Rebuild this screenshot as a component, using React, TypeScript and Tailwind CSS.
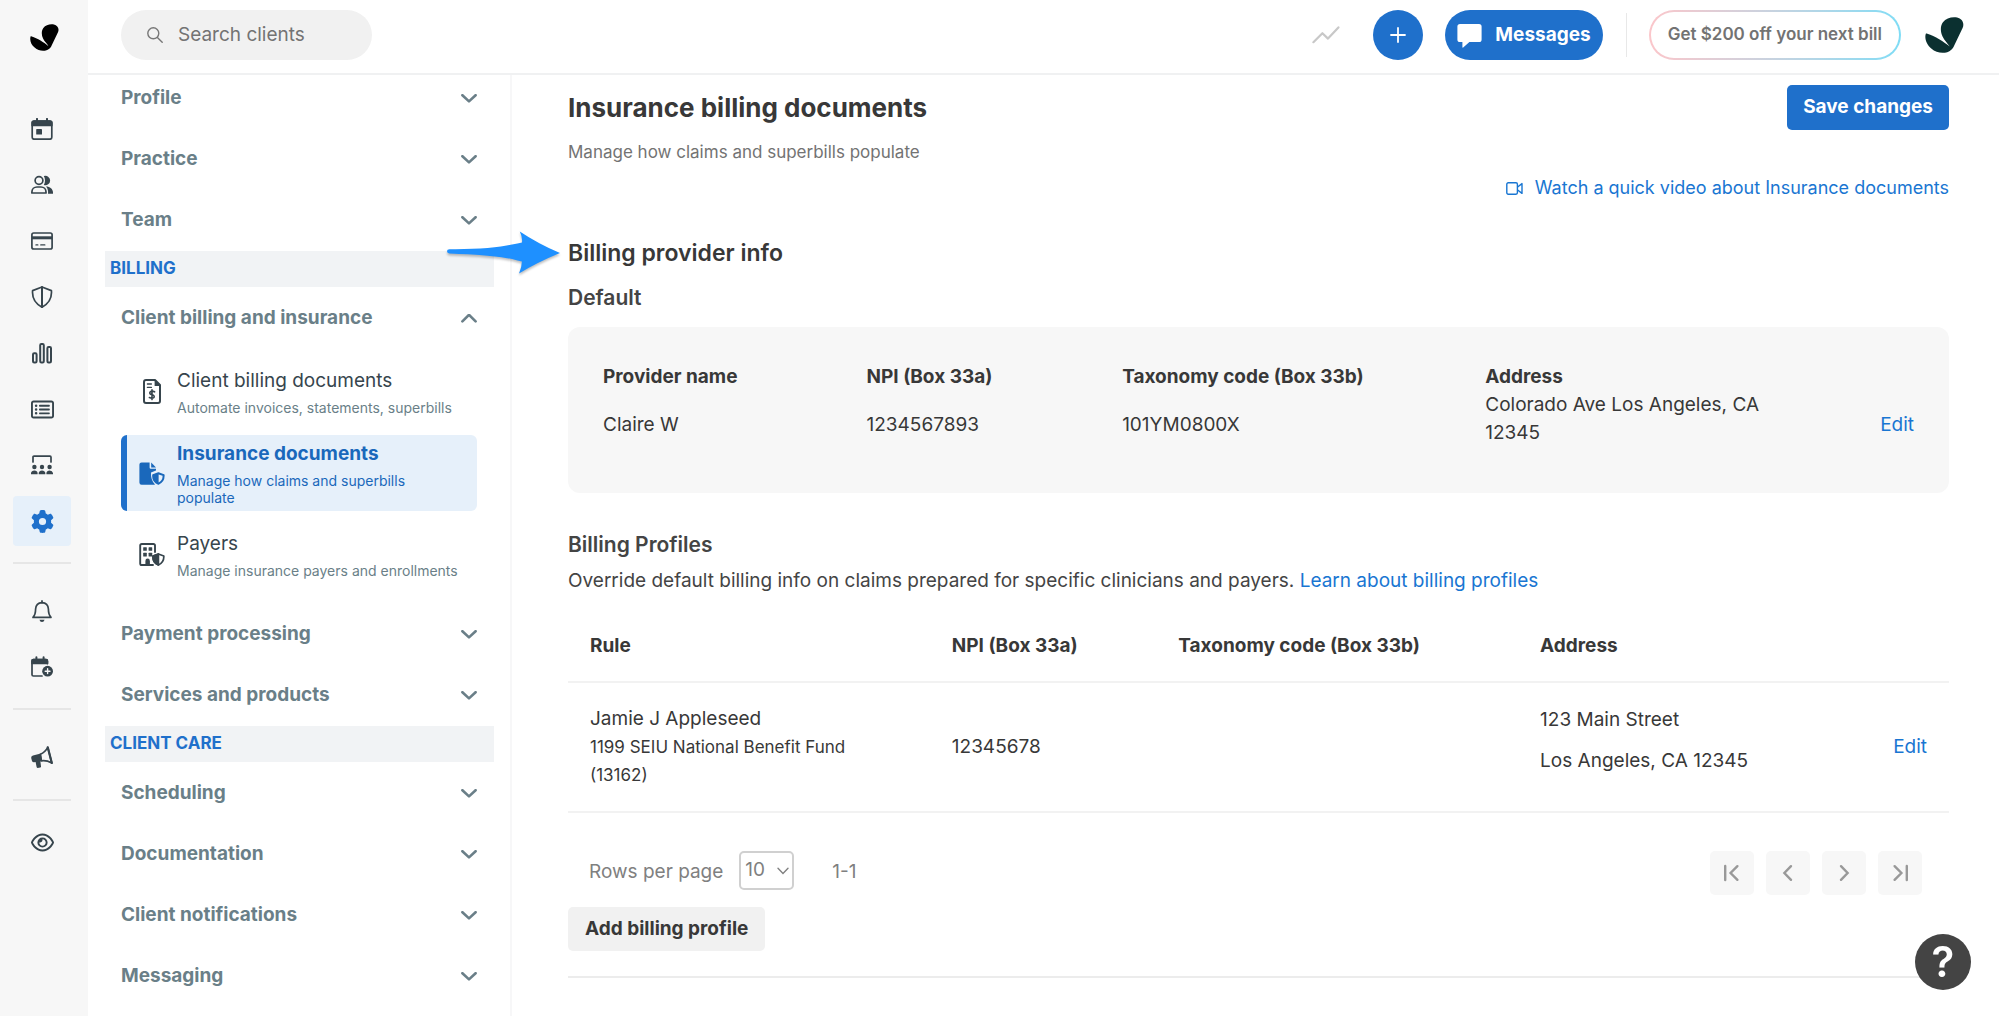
import React, { ReactNode } from 'react'
import { FaGear, FaRegEye, FaRegRectangleList } from 'react-icons/fa6'

function LeafLogo({ className }: { className: string }) {
  return (
    <svg viewBox="0 0 40 37" className={className} fill="currentColor" aria-hidden="true">
      <path d="M0.8 17.2C-0.8 22 1.6 28.6 6.4 32.4C12.6 37.8 21.6 38.4 27 33.6C28.6 32 29.2 31 30 29.2L38.6 11.4C40.8 6.4 38 1.6 33 0.6C28 -0.4 21.6 1 18.4 5.4C15.4 9.6 15.8 15.4 18 20C20 24.2 23.6 27.4 25.4 30.4C19.6 25.6 10 19.4 2.4 17.2C1.6 16.8 1 16.8 0.8 17.2Z" />
    </svg>
  )
}

function Icon({ children, className = 'size-[22px]', box = '0 0 22 22' }: { children: ReactNode; className?: string; box?: string }) {
  return (
    <svg viewBox={box} className={className} fill="none" stroke="currentColor" strokeWidth="1.7" strokeLinejoin="round" strokeLinecap="round" aria-hidden="true">
      {children}
    </svg>
  )
}

const CalendarIcon = () => (
  <Icon>
    <rect x="1.2" y="3" width="19.6" height="18.2" rx="2" />
    <path d="M1.2 7.4V5Q1.2 3 3.2 3H18.8Q20.8 3 20.8 5V7.4Z" fill="currentColor" />
    <path d="M6 0.9V3M16 0.9V3" strokeWidth="2" />
    <rect x="5.2" y="11" width="5.8" height="5.6" rx="0.4" fill="currentColor" stroke="none" />
  </Icon>
)

const PeopleIcon = () => (
  <Icon>
    <circle cx="8" cy="6.5" r="3.9" />
    <path d="M0.9 19V18C0.9 15 3.2 13 6 13H10C12.8 13 15 15 15 18V19Z" />
    <path d="M12.8 2.1A4.7 4.7 0 1 1 12.8 10.9Q14 9 14 6.5T12.8 2.1Z" fill="currentColor" stroke="none" />
    <path d="M15 12.4C19 12.4 22 14.8 22 18.6V19.8H17C17.4 17 16.8 14.4 15 12.4Z" fill="currentColor" stroke="none" />
  </Icon>
)

const CardIcon = () => (
  <Icon>
    <rect x="0.9" y="3" width="20.2" height="16" rx="1.8" />
    <path d="M1 7.8H21" strokeWidth="3" strokeLinecap="butt" />
    <path d="M5 14.9H6.8M9.8 14.9H13.8" strokeWidth="1.4" />
  </Icon>
)

const ShieldIcon = () => (
  <Icon>
    <path d="M11 1L20.4 4.6Q21.4 15.6 11 21.2Q0.6 15.6 1.6 4.6Z" />
    <path d="M11 1V21" strokeWidth="2" />
  </Icon>
)

const ChartIcon = () => (
  <Icon>
    <rect x="2" y="11.2" width="3.6" height="9.2" rx="1.2" strokeWidth="2" />
    <rect x="9.2" y="2" width="3.6" height="18.4" rx="1.2" strokeWidth="2" />
    <rect x="16.4" y="5" width="3.6" height="15.4" rx="1.2" strokeWidth="2" />
  </Icon>
)

const GroupIcon = () => (
  <Icon>
    <path d="M2 8V3.2Q2 2.2 3 2.2H19Q20 2.2 20 3.2V8" />
    <g fill="currentColor" stroke="none">
      <circle cx="3.4" cy="13" r="2.2" />
      <circle cx="11" cy="13" r="2.2" />
      <circle cx="18.6" cy="13" r="2.2" />
      <path d="M0 20.2V19Q0.4 16.4 3.4 16.4T6.6 19V20.2Z" />
      <path d="M7.7 20.2V19Q8.1 16.4 11 16.4T14.3 19V20.2Z" />
      <path d="M15.4 20.2V19Q15.8 16.4 18.6 16.4T22 19V20.2Z" />
    </g>
  </Icon>
)

const BellIcon = () => (
  <Icon>
    <path d="M2 17.4Q4.6 14.6 4.6 9Q5 3 11 2.6Q17 3 17.4 9Q17.4 14.6 20 17.4Z" />
    <path d="M11 0.9V2.4" />
    <path d="M8.4 19.8H13.6Q13 22 11 22T8.4 19.8Z" fill="currentColor" stroke="none" />
  </Icon>
)

const CalendarPlusIcon = () => (
  <Icon>
    <path d="M16.4 7.6V5Q16.4 3.6 15 3.6H2.4Q1 3.6 1 5V18.8Q1 20 2.4 20H11" />
    <path d="M1 7.4V5Q1 3.6 2.4 3.6H15Q16.4 3.6 16.4 5V7.4Z" fill="currentColor" />
    <path d="M5.4 1.2V3M12.6 1.2V3" strokeWidth="2" />
    <circle cx="16.6" cy="15.2" r="5.4" fill="currentColor" stroke="none" />
    <path d="M16.6 12.8V17.6M14.2 15.2H19" stroke="#f7f7f7" strokeWidth="1.4" />
  </Icon>
)

const MegaphoneIcon = () => (
  <Icon>
    <path d="M9.4 8.2Q14 6.4 16.8 1.4L20.8 17Q15.4 14 10.4 14.8Z" />
    <path d="M9.8 7.6L2 9.6Q0 10.2 0.2 12L1 15Q1.6 16.4 3.2 16.2L4.6 16L5.6 21Q5.8 22 6.8 22L9.2 21.6Q10.2 21.4 10 20.4L9.4 15.4L11 15Z" fill="currentColor" stroke="none" />
    <path d="M16.8 1.4L20.8 17" strokeWidth="2.2" />
  </Icon>
)

const InvoiceIcon = () => (
  <Icon box="0 0 18 25" className="h-[25px] w-[18px] text-[#37454d]">
    <path d="M1 3Q1 1 3 1H12L17 6V22Q17 24 15 24H3Q1 24 1 22Z" strokeWidth="2" />
    <path d="M11.6 0.6L17.8 7H11.6Z" fill="currentColor" stroke="none" />
    <path d="M4.4 5H8.4M4.4 8.4H8.4" strokeWidth="1.3" />
    <path d="M11.6 12.8Q8.9 11.4 7.3 12.8C6 14.4 7.2 15.4 9 15.8S12 17.4 10.7 18.7Q9.2 19.8 6.4 18.6M9 10.8V20.6" strokeWidth="1.6" />
  </Icon>
)

const DocShieldIcon = () => (
  <Icon box="0 0 26 23" className="h-[23px] w-[26px] text-[#1a68bb]">
    <path d="M2.6 0.4H10.6V5.6Q10.6 6.8 11.8 6.8H17V8.6L12 10.6Q11.6 18.6 16 22.4Q15.4 22.8 14.6 22.8H2.6Q0.4 22.8 0.4 20.6V2.6Q0.4 0.4 2.6 0.4Z" fill="currentColor" stroke="none" />
    <path d="M12.2 0.4L17 5.4H12.2Z" fill="currentColor" stroke="none" />
    <path d="M19.4 11L24.8 13Q25.2 19.4 19.4 22Q13.4 19.4 14 13Z" strokeWidth="1.6" fill="currentColor" />
    <path d="M19.6 12.4L23.6 13.8Q23.8 18.4 19.6 20.6Z" fill="#e6f0fa" stroke="none" />
  </Icon>
)

const BuildingShieldIcon = () => (
  <Icon box="0 0 26 23" className="h-[23px] w-[26px] text-[#37454d]">
    <path d="M16 9V2.6Q16 1 14.4 1H2.8Q1.2 1 1.2 2.6V20.4Q1.2 22 2.8 22H14" strokeWidth="1.9" />
    <g fill="currentColor" stroke="none">
      <rect x="4.2" y="4.2" width="3.6" height="3.6" rx="0.5" />
      <rect x="9.6" y="4.2" width="3.6" height="3.6" rx="0.5" />
      <rect x="4.2" y="9.8" width="3.6" height="3.6" rx="0.5" />
      <rect x="9.6" y="9.8" width="3.6" height="3.6" rx="0.5" />
      <path d="M6.4 22V18Q6.4 15.6 8.6 15.6T10.9 18V22Z" />
    </g>
    <path d="M19.4 11L24.8 13Q25.2 19.4 19.4 22Q13.4 19.4 14 13Z" fill="#fff" />
    <path d="M19.4 11V22Q13.4 19.4 14 13Z" fill="currentColor" />
  </Icon>
)

function Chevron({ up = false }: { up?: boolean }) {
  return (
    <svg viewBox="0 0 16 10" className="h-2.5 w-4 shrink-0" fill="none" stroke="currentColor" strokeWidth="2.6" strokeLinecap="round" strokeLinejoin="round" aria-hidden="true">
      <path d={up ? 'M1.4 7.4L8 0.8L14.6 7.4' : 'M1.4 1.2L8 7.4L14.6 1.2'} />
    </svg>
  )
}

function RailLink({ label, active = false, children }: { label: string; active?: boolean; children: ReactNode }) {
  return (
    <a
      href="#"
      aria-label={label}
      className={
        active
          ? 'flex h-[50px] w-[58px] items-center justify-center rounded-[4px] bg-[#e6f0fa] text-[#1f70cb]'
          : 'flex h-[50px] w-[58px] items-center justify-center text-[#37454d]'
      }
    >
      {children}
    </a>
  )
}

function Rail() {
  return (
    <nav aria-label="Main" className="flex w-[88px] shrink-0 flex-col bg-[#f7f7f7] pl-[13px]">
      <a href="#" aria-label="Home" className="flex h-[75px] w-[58px] items-center justify-center pl-[5px] text-black">
        <LeafLogo className="h-[27px] w-[29px]" />
      </a>
      <div className="mt-[29px] flex flex-col gap-1.5">
        <RailLink label="Calendar"><CalendarIcon /></RailLink>
        <RailLink label="Clients"><PeopleIcon /></RailLink>
        <RailLink label="Billing"><CardIcon /></RailLink>
        <RailLink label="Insurance"><ShieldIcon /></RailLink>
        <RailLink label="Analytics"><ChartIcon /></RailLink>
        <RailLink label="Activity"><FaRegRectangleList className="size-[23px]" /></RailLink>
        <RailLink label="Team"><GroupIcon /></RailLink>
        <RailLink label="Settings" active><FaGear className="size-[23px]" /></RailLink>
      </div>
      <hr className="mt-4 w-[58px] border-t-2 border-[#e6e6e6]" />
      <div className="mt-[22px] flex flex-col gap-1.5">
        <RailLink label="Reminders"><BellIcon /></RailLink>
        <RailLink label="Requests"><CalendarPlusIcon /></RailLink>
      </div>
      <hr className="mt-4 w-[58px] border-t-2 border-[#e6e6e6]" />
      <div className="mt-[22px]">
        <RailLink label="Marketing"><MegaphoneIcon /></RailLink>
      </div>
      <hr className="mt-[17px] w-[58px] border-t-2 border-[#e6e6e6]" />
      <div className="mt-4">
        <RailLink label="Preview"><FaRegEye className="size-[23px]" /></RailLink>
      </div>
    </nav>
  )
}

function Header() {
  return (
    <header className="flex h-[75px] shrink-0 items-center border-b-2 border-[#f0f1f2] pr-[35px] pb-[3px] pl-[33px]">
      <label className="flex h-[50px] w-[251px] items-center gap-[15px] rounded-full bg-[#f1f1f1] pl-[26px]">
        <svg viewBox="0 0 16 16" className="size-4 shrink-0 text-[#777]" fill="none" stroke="currentColor" strokeWidth="1.4" strokeLinecap="round" aria-hidden="true">
          <circle cx="6.3" cy="6.3" r="5.5" />
          <path d="M10.4 10.4L15.2 15.2" />
        </svg>
        <input type="search" aria-label="Search clients" placeholder="Search clients" className="w-full min-w-0 bg-transparent pr-6 text-[19px] outline-none placeholder:text-[#737373]" />
      </label>
      <div className="ml-auto flex items-center">
        <button type="button" aria-label="Activity" className="text-[#c8c8c8]">
          <svg viewBox="0 0 28 18" className="h-[18px] w-7" fill="none" stroke="currentColor" strokeWidth="2.2" strokeLinejoin="round" strokeLinecap="round" aria-hidden="true">
            <path d="M1.4 16.2L10.4 7.2L16 12.6L26.4 1.4" />
          </svg>
        </button>
        <button type="button" aria-label="Add" className="ml-[33px] flex size-[50px] items-center justify-center rounded-full bg-[#1f70cb] text-white">
          <svg viewBox="0 0 16 16" className="size-4" stroke="currentColor" strokeWidth="1.8" strokeLinecap="round" aria-hidden="true">
            <path d="M8 1V15M1 8H15" />
          </svg>
        </button>
        <button type="button" className="ml-[22px] flex h-[50px] items-center gap-[13px] rounded-full bg-[#1f70cb] pr-3 pl-3 text-[19px] font-bold text-white">
          <svg viewBox="0 0 25 25" className="size-[25px]" fill="currentColor" aria-hidden="true">
            <path d="M3 1H22Q24.6 1 24.6 3.6V16.4Q24.6 19 22 19H12.4L6.2 24.6Q5.4 25 5.4 24V19H3Q0.4 19 0.4 16.4V3.6Q0.4 1 3 1Z" />
          </svg>
          Messages
        </button>
        <div className="ml-[23px] h-11 w-px bg-[#e8e8e8]" />
        <button type="button" className="ml-[22px] h-[50px] rounded-full bg-linear-to-r from-[#fbc6ca] to-[#7fdcf5] p-[2px] text-[17px] font-semibold text-[#737373]">
          <span className="flex h-full items-center rounded-full bg-white px-[17px]">Get $200 off your next bill</span>
        </button>
        <a href="#" aria-label="Account" className="ml-6 text-[#0b3030]">
          <LeafLogo className="h-9 w-[39px]" />
        </a>
      </div>
    </header>
  )
}

function NavItem({ label, open = false }: { label: string; open?: boolean }) {
  return (
    <button type="button" aria-expanded={open} className="flex h-[61px] w-full shrink-0 items-center justify-between pr-[33px] pl-[33px] text-left text-[19px] font-bold text-[#6a7f88]">
      {label}
      <Chevron up={open} />
    </button>
  )
}

function NavSection({ label }: { label: string }) {
  return <h2 className="mr-4 mb-px ml-[17px] flex h-9 shrink-0 items-center bg-[#f1f3f5] pl-[5px] text-[17px] font-bold text-[#1f70cb]">{label}</h2>
}

function SubItem({ icon, title, text, active = false }: { icon: ReactNode; title: string; text: string; active?: boolean }) {
  return (
    <li>
      <a
        href="#"
        className={
          active
            ? 'flex items-center rounded-md border-l-[6px] border-[#1f70cb] bg-[#e6f0fa] py-[5px] text-[#1a68bb]'
            : 'flex items-center border-l-[6px] border-transparent py-[5px] text-[#37454d]'
        }
      >
        <span className="flex w-[50px] shrink-0 justify-center">{icon}</span>
        <span className="flex flex-col gap-1">
          <span className={active ? 'text-[19px] leading-7 font-bold' : 'text-[19px] leading-7'}>{title}</span>
          <span className={active ? 'pr-8 text-[14px] leading-[17px]' : 'text-[14px] leading-[17px] whitespace-nowrap text-[#6a7f88]'}>{text}</span>
        </span>
      </a>
    </li>
  )
}

function SettingsNav() {
  return (
    <nav aria-label="Settings" className="w-[424px] shrink-0 overflow-hidden border-r-2 border-[#f7f7f8]">
      <div className="-mt-[7px] flex flex-col">
        <NavItem label="Profile" />
        <NavItem label="Practice" />
        <NavItem label="Team" />
        <NavSection label="BILLING" />
        <NavItem label="Client billing and insurance" open />
        <ul className="mt-[13px] mr-[33px] mb-5 ml-[33px] flex flex-col gap-3.5">
          <SubItem icon={<InvoiceIcon />} title="Client billing documents" text="Automate invoices, statements, superbills" />
          <SubItem icon={<DocShieldIcon />} title="Insurance documents" text="Manage how claims and superbills populate" active />
          <SubItem icon={<BuildingShieldIcon />} title="Payers" text="Manage insurance payers and enrollments" />
        </ul>
        <NavItem label="Payment processing" />
        <NavItem label="Services and products" />
        <NavSection label="CLIENT CARE" />
        <NavItem label="Scheduling" />
        <NavItem label="Documentation" />
        <NavItem label="Client notifications" />
        <NavItem label="Messaging" />
      </div>
    </nav>
  )
}

function DefaultProvider() {
  return (
    <div className="mt-[15px] rounded-xl bg-[#f7f7f7] px-[35px] pt-9 pb-[46px]">
      <table className="w-full table-fixed text-left leading-7">
        <colgroup>
          <col className="w-[20.1%]" />
          <col className="w-[19.5%]" />
          <col className="w-[27.7%]" />
          <col className="w-[22.7%]" />
          <col />
        </colgroup>
        <thead>
          <tr>
            <th scope="col" className="font-bold">Provider name</th>
            <th scope="col" className="font-bold">NPI (Box 33a)</th>
            <th scope="col" className="font-bold">Taxonomy code (Box 33b)</th>
            <th scope="col" className="font-bold">Address</th>
            <td />
          </tr>
        </thead>
        <tbody>
          <tr className="align-top">
            <td className="pt-5">Claire W</td>
            <td className="pt-5">1234567893</td>
            <td className="pt-5">101YM0800X</td>
            <td>Colorado Ave Los Angeles, CA 12345</td>
            <td className="pt-5 text-right"><a href="#" className="text-[#1976d2]">Edit</a></td>
          </tr>
        </tbody>
      </table>
    </div>
  )
}

function ProfilesTable() {
  return (
    <table className="mt-4 w-full table-fixed text-left leading-7">
      <colgroup>
        <col className="w-[26.2%]" />
        <col className="w-[16.4%]" />
        <col className="w-[26.2%]" />
        <col className="w-[22%]" />
        <col />
      </colgroup>
      <thead>
        <tr className="h-[71px] border-b-2 border-[#f2f2f2]">
          <th scope="col" className="pl-[22px] font-bold">Rule</th>
          <th scope="col" className="pl-[22px] font-bold">NPI (Box 33a)</th>
          <th scope="col" className="pl-[22px] font-bold">Taxonomy code (Box 33b)</th>
          <th scope="col" className="pl-[22px] font-bold">Address</th>
          <td />
        </tr>
      </thead>
      <tbody>
        <tr className="h-[130px] border-b-2 border-[#f2f2f2]">
          <td className="pr-10 pl-[22px]">
            Jamie J Appleseed
            <div className="text-[17px]">1199 SEIU National Benefit Fund (13162)</div>
          </td>
          <td className="pl-[22px]">12345678</td>
          <td />
          <td className="pl-[22px]">
            <p className="mb-[13px]">123 Main Street</p>
            <p className="mb-[13px]">Los Angeles, CA 12345</p>
          </td>
          <td className="pr-[22px] text-right"><a href="#" className="text-[#1976d2]">Edit</a></td>
        </tr>
      </tbody>
    </table>
  )
}

function PageButton({ label, path }: { label: string; path: string }) {
  return (
    <button type="button" aria-label={label} className="flex size-11 items-center justify-center rounded-[5px] bg-[#f7f7f7] text-[#999]">
      <svg viewBox="0 0 18 18" className="size-[18px]" fill="none" stroke="currentColor" strokeWidth="2.4" strokeLinecap="round" aria-hidden="true">
        <path d={path} />
      </svg>
    </button>
  )
}

function Pagination() {
  return (
    <div className="mt-[38px] flex items-start justify-between pr-[27px] pl-[21px] text-[#808080]">
      <div className="flex h-[38px] items-center">
        <label htmlFor="rows" className="pt-1">Rows per page</label>
        <span className="relative ml-4 block">
          <select id="rows" defaultValue="10" className="h-[39px] w-[55px] appearance-none rounded-[5px] border-2 border-[#d0d0d0] bg-white pl-1 text-[19px]">
            <option>10</option>
            <option>25</option>
            <option>50</option>
          </select>
          <svg viewBox="0 0 12 8" className="pointer-events-none absolute top-4 right-[5px] h-2 w-3" fill="none" stroke="currentColor" strokeWidth="1.4" strokeLinecap="round" aria-hidden="true">
            <path d="M1 1.2L6 6.4L11 1.2" />
          </svg>
        </span>
        <span className="pt-1 pl-[38px]">1-1</span>
      </div>
      <div className="flex gap-3">
        <PageButton label="First page" path="M2.2 2V16M14.4 2.2L7.6 9L14.4 15.8" />
        <PageButton label="Previous page" path="M12 2.2L5.4 9L12 15.8" />
        <PageButton label="Next page" path="M6 2.2L12.6 9L6 15.8" />
        <PageButton label="Last page" path="M15.8 2V16M3.6 2.2L10.4 9L3.6 15.8" />
      </div>
    </div>
  )
}

export default function App() {
  return (
    <div className="flex h-screen overflow-hidden bg-white font-['Inter',sans-serif] text-[19px] text-[#383838]">
      <Rail />
      <div className="flex min-w-0 flex-1 flex-col">
        <Header />
        <div className="flex min-h-0 flex-1">
          <SettingsNav />
          <main className="relative min-w-0 flex-1 pt-2.5 pr-[50px] pl-14">
            <svg viewBox="0 0 116 48" className="absolute top-[154px] -left-[66px] h-12 w-[116px] drop-shadow-[0_2px_1px_rgba(0,0,0,0.25)]" aria-hidden="true">
              <path d="M3.4 20.2Q44 20.6 66 15.6Q72 14.4 76 13.6Q76.6 8 73.8 2.4Q92 14.6 114 24Q92 33 73 44.4Q76 38 75.8 32.4Q72 31.6 66 30Q48 26 3.4 24.4Q1 24 1 22.2T3.4 20.2Z" fill="#1e90ff" />
            </svg>
            <div className="flex h-[45px] items-center justify-between">
              <h1 className="text-[26px] leading-8 font-bold">Insurance billing documents</h1>
              <button type="button" className="h-[45px] rounded-[5px] bg-[#1f70cb] px-4 font-bold text-white">Save changes</button>
            </div>
            <p className="mt-2 text-[17px] leading-7 text-[#737373]">Manage how claims and superbills populate</p>
            <div className="mt-2 flex justify-end">
              <a href="#" className="flex items-center gap-3 text-[18px] leading-7 text-[#1976d2]">
                <svg viewBox="0 0 17 13" className="h-[13px] w-[17px]" fill="none" stroke="currentColor" strokeWidth="1.4" strokeLinejoin="round" aria-hidden="true">
                  <rect x="0.8" y="0.8" width="10.6" height="11.4" rx="1.4" />
                  <path d="M11.6 5L16 1.6V11.4L11.6 8" />
                </svg>
                Watch a quick video about Insurance documents
              </a>
            </div>
            <h2 className="mt-[35px] text-[23px] leading-8 font-semibold">Billing provider info</h2>
            <h3 className="mt-[15px] text-[21px] leading-7 font-semibold text-[#444]">Default</h3>
            <DefaultProvider />
            <h3 className="mt-[38px] text-[21px] leading-7 font-semibold text-[#444]">Billing Profiles</h3>
            <p className="mt-2 leading-7 text-[#444]">
              Override default billing info on claims prepared for specific clinicians and payers.{' '}
              <a href="#" className="text-[#1976d2]">Learn about billing profiles</a>
            </p>
            <ProfilesTable />
            <Pagination />
            <button type="button" className="mt-3 h-11 rounded-[5px] bg-[#f1f1f1] px-[17px] font-bold">Add billing profile</button>
            <hr className="mt-[25px] border-t-2 border-[#ececec]" />
          </main>
        </div>
      </div>
      <button type="button" aria-label="Help" className="fixed right-7 bottom-[26px] flex size-14 items-center justify-center rounded-full bg-[#444] text-[42px] leading-none font-semibold text-white">
        ?
      </button>
    </div>
  )
}
